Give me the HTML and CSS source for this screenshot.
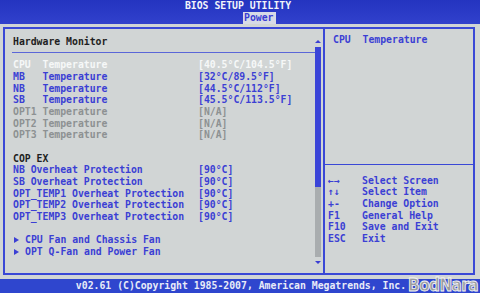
FILE: index.html
```html
<!DOCTYPE html>
<html lang="en">
<head>
    <meta charset="UTF-8">
    <meta name="viewport" content="width=device-width, initial-scale=1.0">
    <title>BIOS Setup Utility</title>
    <link rel="stylesheet" href="styles.css">
</head>
<body>
    <div class="screen">
        <header class="topbar">
            <div class="title">BIOS SETUP UTILITY</div>
            <div class="tabs"><span class="tab">Power</span></div>
        </header>

        <main class="frame">
            <section class="left">
                <div class="content">
                    <div class="heading">Hardware Monitor</div>
                    <div class="rule"></div>

                    <div class="row selected"><span>CPU  Temperature</span><span>[40.5°C/104.5°F]</span></div>
                    <div class="row"><span>MB   Temperature</span><span>[32°C/89.5°F]</span></div>
                    <div class="row"><span>NB   Temperature</span><span>[44.5°C/112°F]</span></div>
                    <div class="row"><span>SB   Temperature</span><span>[45.5°C/113.5°F]</span></div>
                    <div class="row disabled"><span>OPT1 Temperature</span><span>[N/A]</span></div>
                    <div class="row disabled"><span>OPT2 Temperature</span><span>[N/A]</span></div>
                    <div class="row disabled"><span>OPT3 Temperature</span><span>[N/A]</span></div>
                    <div class="blank"></div>

                    <div class="row heading-row"><span>COP EX</span></div>
                    <div class="row"><span>NB Overheat Protection</span><span>[90°C]</span></div>
                    <div class="row"><span>SB Overheat Protection</span><span>[90°C]</span></div>
                    <div class="row"><span>OPT_TEMP1 Overheat Protection</span><span>[90°C]</span></div>
                    <div class="row"><span>OPT_TEMP2 Overheat Protection</span><span>[90°C]</span></div>
                    <div class="row"><span>OPT_TEMP3 Overheat Protection</span><span>[90°C]</span></div>
                    <div class="blank"></div>

                    <div class="submenu"><span class="bullet"></span>CPU Fan and Chassis Fan</div>
                    <div class="submenu"><span class="bullet"></span>OPT Q-Fan and Power Fan</div>
                </div>
                <div class="scrollbar">
                    <span class="arrow up"></span>
                    <div class="track"><div class="thumb"></div></div>
                    <span class="arrow down"></span>
                </div>
            </section>

            <aside class="right">
                <div class="help">CPU  Temperature</div>
                <div class="keys">
                    <div class="key"><span>←→</span><span>Select Screen</span></div>
                    <div class="key"><span>↑↓</span><span>Select Item</span></div>
                    <div class="key"><span>+-</span><span>Change Option</span></div>
                    <div class="key"><span>F1</span><span>General Help</span></div>
                    <div class="key"><span>F10</span><span>Save and Exit</span></div>
                    <div class="key"><span>ESC</span><span>Exit</span></div>
                </div>
            </aside>
        </main>

        <footer class="bottombar">v02.61 (C)Copyright 1985-2007, American Megatrends, Inc.</footer>
        <div class="watermark">BodNara</div>
    </div>
</body>
</html>
```

FILE: styles.css
```css
body {
    margin: 0;
    background-color: #d1d5d5;
    font-family: "DejaVu Sans Mono", "Liberation Mono", monospace;
    font-size: 9.8px;
    font-weight: bold;
}

.screen {
    position: relative;
    width: 480px;
    height: 293px;
    overflow: hidden;
    display: flex;
    flex-direction: column;
}

/* top bar */
.topbar {
    height: 24px;
    background: linear-gradient(#2434c0, #3141cc);
    color: #f2f4fa;
}

.title {
    height: 12px;
    line-height: 11px;
    text-align: center;
    padding-right: 4px;
}

.tabs {
    padding-left: 243px;
}

.tab {
    display: inline-block;
    height: 12px;
    line-height: 12px;
    padding: 0 2px 0 1px;
    background-color: #d6dae6;
    color: #3a3ed4;
}

/* main frame */
.frame {
    margin: 3px 5px 0 3px;
    height: 244px;
    flex-shrink: 0;
    border: 2px solid #3a48d6;
    display: flex;
}

.left {
    width: 318px;
    display: flex;
}

.content {
    flex: 1;
    padding: 7px 0 0 8px;
    line-height: 11.67px;
    color: #3b3fd4;
}

.heading {
    color: #1e1e22;
    white-space: pre;
}

.rule {
    height: 1.5px;
    margin: 4px 0 6.2px -1px;
    background-color: #5a66d8;
}

.row {
    display: grid;
    grid-template-columns: 185px auto;
    white-space: pre;
}

.row.selected {
    color: #f6f8f8;
}

.row.disabled {
    color: #8d9192;
}

.row.heading-row {
    color: #1e1e22;
}

.blank {
    height: 11.67px;
}

.submenu {
    display: flex;
    align-items: center;
    white-space: pre;
}

.bullet {
    width: 0;
    height: 0;
    margin: 0 6px 0 1px;
    border-top: 3px solid transparent;
    border-bottom: 3px solid transparent;
    border-left: 5px solid #3b3fd4;
}

/* scrollbar */
.scrollbar {
    width: 6px;
    margin-right: 2px;
    padding-top: 11px;
    display: flex;
    flex-direction: column;
    align-items: center;
}

.arrow {
    width: 0;
    height: 0;
    border-left: 3px solid transparent;
    border-right: 3px solid transparent;
}

.arrow.up {
    border-bottom: 3px solid #3b3fd4;
    margin-bottom: 4px;
}

.arrow.down {
    border-top: 3px solid #3b3fd4;
    margin-top: 4px;
}

.track {
    width: 6px;
    height: 210px;
    background-color: #a9adaf;
}

.thumb {
    height: 140px;
    background-color: #3a44d8;
}

/* help panel */
.right {
    flex: 1;
    border-left: 2px solid #3a48d6;
    display: flex;
    flex-direction: column;
    color: #3b3fd4;
    line-height: 11.67px;
}

.help {
    height: 130px;
    padding: 5px 0 0 8px;
    border-bottom: 1.5px solid #3a48d6;
    white-space: pre;
}

.keys {
    padding: 9.5px 0 0 3px;
}

.key {
    display: grid;
    grid-template-columns: 34px auto;
    white-space: pre;
}

/* bottom bar */
.bottombar {
    margin-top: 4px;
    flex: 1;
    background-color: #2f46ce;
    color: #e8ecf8;
    text-align: center;
    line-height: 14px;
    padding-left: 2px;
    white-space: nowrap;
}

.watermark {
    position: absolute;
    right: 2px;
    bottom: -2px;
    font-family: "DejaVu Sans Condensed", "DejaVu Sans", sans-serif;
    font-size: 17px;
    font-weight: bold;
    letter-spacing: -0.6px;
    color: #9a9c9e;
    -webkit-text-stroke: 0.8px #f4f4f4;
}
```
